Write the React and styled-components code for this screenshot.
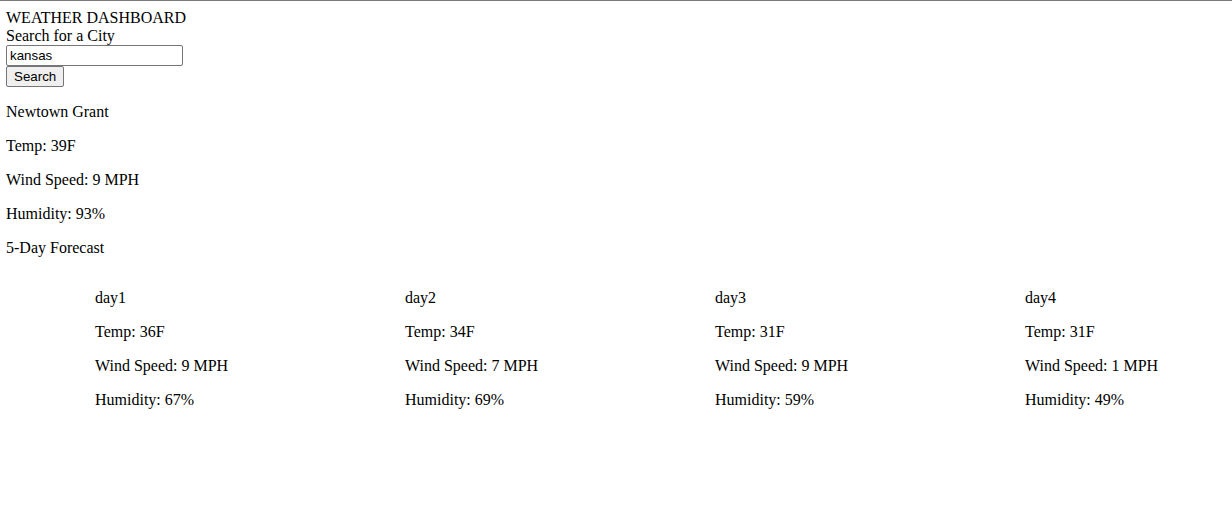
import styled, { createGlobalStyle } from "styled-components"

const GlobalStyle = createGlobalStyle`
    html, body {
        margin: 0;
        padding: 0;
        background: #ffffff;
        overflow: hidden;
    }
    body {
        font-family: "Liberation Serif", "Times New Roman", serif;
        font-size: 16px;
        line-height: 18px;
        color: #000000;
    }
`

const current = {
    city: "Newtown Grant",
    temp: 39,
    wind: 9,
    humidity: 93,
}

const forecast = [
    { name: "day1", temp: 36, wind: 9, humidity: 67 },
    { name: "day2", temp: 34, wind: 7, humidity: 69 },
    { name: "day3", temp: 31, wind: 9, humidity: 59 },
    { name: "day4", temp: 31, wind: 1, humidity: 49 },
]

const App = () => {
    return (
        <>
            <GlobalStyle />
            <Page>
                <Header>
                    <div className="title">WEATHER DASHBOARD</div>
                    <label htmlFor="city">Search for a City</label>
                    <SearchInput id="city" type="text" defaultValue="kansas" />
                    <SearchButton type="button">Search</SearchButton>
                </Header>
                <Current>
                    <p>{current.city}</p>
                    <p>Temp: {current.temp}F</p>
                    <p>Wind Speed: {current.wind} MPH</p>
                    <p>Humidity: {current.humidity}%</p>
                    <p>5-Day Forecast</p>
                </Current>
                <ForecastRow>
                    {forecast.map((day) => (
                        <DayCard key={day.name}>
                            <p>{day.name}</p>
                            <p>Temp: {day.temp}F</p>
                            <p>Wind Speed: {day.wind} MPH</p>
                            <p>Humidity: {day.humidity}%</p>
                        </DayCard>
                    ))}
                </ForecastRow>
            </Page>
        </>
    )
}

const Page = styled.div`
    box-sizing: border-box;
    width: 100%;
    min-height: 531px;
    border-top: 1px solid #7b7b7b;
    padding: 8px 6px;
`

const Header = styled.div`
    display: flex;
    flex-direction: column;
    align-items: flex-start;

    .title, label {
        line-height: 18px;
    }
`

const SearchInput = styled.input`
    box-sizing: border-box;
    width: 177px;
    height: 21px;
    margin: 0;
    padding: 1px 3px;
    border: 1px solid #767676;
    border-radius: 2px;
    font-family: "Liberation Sans", Arial, sans-serif;
    font-size: 13.33px;
    color: #000000;
    outline: none;
`

const SearchButton = styled.button`
    box-sizing: border-box;
    height: 21px;
    margin: 0;
    padding: 1px 7px;
    border: 1px solid #767676;
    border-radius: 2px;
    background: #efefef;
    font-family: "Liberation Sans", Arial, sans-serif;
    font-size: 13.33px;
    color: #000000;
`

const Current = styled.div`
    p {
        margin: 16px 0;
        line-height: 18px;
    }
`

const ForecastRow = styled.div`
    display: grid;
    grid-template-columns: repeat(3, 310px) 1fr;
    padding-left: 89px;
`

const DayCard = styled.div`
    p {
        margin: 16px 0;
        line-height: 18px;
        white-space: nowrap;
    }
`

export default App
